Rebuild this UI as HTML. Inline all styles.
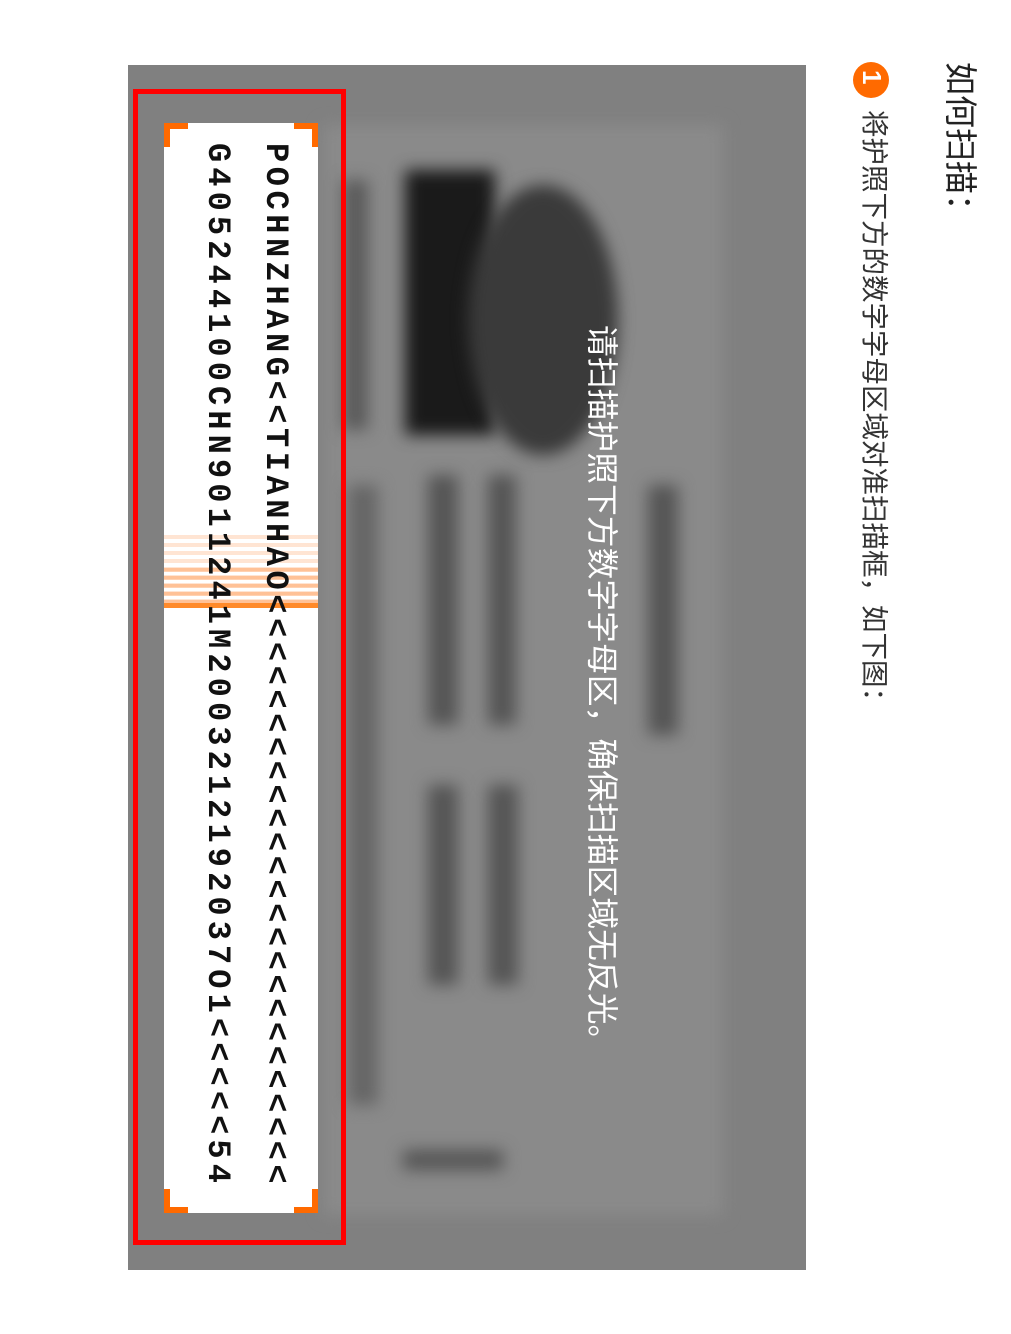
<!DOCTYPE html>
<html><head><meta charset="utf-8"><style>
body{margin:0;width:1011px;height:1334px;background:#fff;position:relative;overflow:hidden;font-family:"Liberation Sans","Noto Sans CJK SC",sans-serif}
.r{position:absolute;transform:rotate(90deg);transform-origin:0 0;white-space:nowrap}
.bg{position:absolute;left:128px;top:65px;width:678px;height:1205px;background:#808080;overflow:hidden}
.blob{position:absolute;filter:blur(8px)}
.mrz{font-family:'Liberation Mono',monospace;font-size:32px;line-height:36px;color:#111;font-weight:bold}
</style></head><body>
<div class="r" style="left:978px;top:62px;font-size:33px;line-height:36px;color:#222">如何扫描：</div>
<div style="position:absolute;left:853px;top:62px;width:36px;height:36px;border-radius:50%;background:#ff6a00"></div>
<div class="r" style="left:887px;top:70px;font-size:26px;line-height:30px;color:#fff;font-weight:bold">1</div>
<div class="r" style="left:892px;top:110px;font-size:27.5px;line-height:36px;color:#333">将护照下方的数字字母区域对准扫描框，如下图：</div>

<div class="bg">
  <div class="blob" style="left:195px;top:60px;width:400px;height:1090px;background:#8a8a8a"></div>
  <div class="blob" style="left:277px;top:105px;width:90px;height:265px;background:#1a1a1a"></div>
  <div class="blob" style="left:340px;top:120px;width:150px;height:270px;background:#3a3a3a;border-radius:50%"></div>
  <div class="blob" style="left:215px;top:115px;width:25px;height:250px;background:#5a5a5a"></div>
  <div class="blob" style="left:300px;top:410px;width:30px;height:250px;background:#555"></div>
  <div class="blob" style="left:360px;top:410px;width:28px;height:250px;background:#555"></div>
  <div class="blob" style="left:520px;top:420px;width:30px;height:250px;background:#555"></div>
  <div class="blob" style="left:300px;top:720px;width:30px;height:200px;background:#555"></div>
  <div class="blob" style="left:360px;top:720px;width:30px;height:200px;background:#555"></div>
  <div class="blob" style="left:220px;top:420px;width:30px;height:620px;background:#666"></div>
  <div class="blob" style="left:275px;top:1085px;width:100px;height:20px;background:#555"></div>
</div>

<div class="r" style="left:621px;top:325px;font-size:31.8px;line-height:38px;color:#fff">请扫描护照下方数字字母区，确保扫描区域无反光。</div>

<div style="position:absolute;left:133px;top:89px;width:203px;height:1146px;border:5px solid #f00"></div>
<div style="position:absolute;left:164px;top:123px;width:154px;height:1090px;background:#fff;overflow:hidden">
  <div style="position:absolute;left:0;top:412px;width:154px;height:70px;background:repeating-linear-gradient(to bottom,rgba(255,150,80,0.25) 0 4px,transparent 4px 8px)"></div>
  <div style="position:absolute;left:0;top:445px;width:154px;height:37px;background:repeating-linear-gradient(to bottom,rgba(255,140,60,0.4) 0 4px,transparent 4px 8px)"></div>
  <div style="position:absolute;left:0;top:480px;width:154px;height:5px;background:#ff8a2a"></div>
</div>
<div class="r mrz" style="left:293px;top:143px;letter-spacing:4.55px">POCHNZHANG&lt;&lt;TIANHAO&lt;&lt;&lt;&lt;&lt;&lt;&lt;&lt;&lt;&lt;&lt;&lt;&lt;&lt;&lt;&lt;&lt;&lt;&lt;&lt;&lt;&lt;&lt;&lt;&lt;</div>
<div class="r mrz" style="left:235px;top:143px;letter-spacing:5.1px">G405244100CHN9011241M2003212192037O1&lt;&lt;&lt;&lt;&lt;54</div>
<!-- corners -->
<div style="position:absolute;left:164px;top:123px;width:24px;height:6px;background:#ff6a00"></div>
<div style="position:absolute;left:164px;top:123px;width:6px;height:24px;background:#ff6a00"></div>
<div style="position:absolute;left:294px;top:123px;width:24px;height:6px;background:#ff6a00"></div>
<div style="position:absolute;left:312px;top:123px;width:6px;height:24px;background:#ff6a00"></div>
<div style="position:absolute;left:164px;top:1207px;width:24px;height:6px;background:#ff6a00"></div>
<div style="position:absolute;left:164px;top:1189px;width:6px;height:24px;background:#ff6a00"></div>
<div style="position:absolute;left:294px;top:1207px;width:24px;height:6px;background:#ff6a00"></div>
<div style="position:absolute;left:312px;top:1189px;width:6px;height:24px;background:#ff6a00"></div>
</body></html>
